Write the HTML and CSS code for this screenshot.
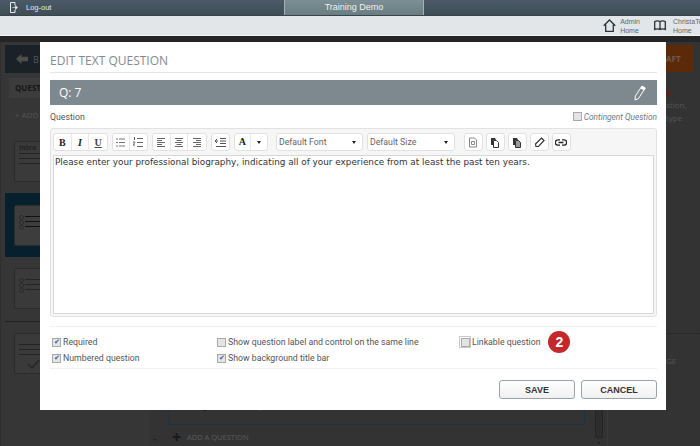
FILE: index.html
```html
<!DOCTYPE html>
<html lang="en">
<head>
    <meta charset="UTF-8">
    <title>Edit Text Question</title>
    <link rel="stylesheet" href="styles.css">
</head>
<body>
    <div class="topbar">
        <div class="logout">
            <svg width="8" height="11" viewBox="0 0 8 11"><path d="M5 3V.5H.5v10H5V8" fill="none" stroke="#e8ecee"/><path d="M2.500 5.500h3M5.500 3.500l2 2-2 2z" fill="#e8ecee" stroke="#e8ecee" stroke-width=".7"/></svg>
            <span>Log-out</span>
        </div>
        <div class="demo-tab">Training Demo</div>
    </div>
    <div class="subbar">
        <div class="nav-item">
            <svg width="13" height="13" viewBox="0 0 13 13"><path d="M.7 6.800 6.500 1l5.800 5.800M2.700 5.500v6.800h7.600V5.500" fill="none" stroke="#2b3338" stroke-width="1.300"/></svg>
            <div class="nav-text">Admin<br>Home</div>
        </div>
        <div class="nav-item nav-book">
            <svg width="12" height="11" viewBox="0 0 12 11"><path d="M.7 1.500c2-1 3.500-1 5.300 0 1.800-1 3.300-1 5.300 0v8c-2-1-3.500-1-5.300 0-1.800-1-3.300-1-5.300 0zM6 1.500v8" fill="none" stroke="#2b3338" stroke-width="1.300"/></svg>
            <div class="nav-text">ChristaTest<br>Home</div>
        </div>
    </div>

    <div class="workspace">
        <div class="sidebar">
            <div class="back-btn"><span class="back-arrow"></span>B</div>
            <div class="side-tab">QUESTIONS</div>
            <div class="side-add">+ ADD</div>
            <div class="thumb thumb-intro">
                <div class="thumb-title">intro</div>
                <div class="thumb-line"></div>
                <div class="thumb-line"></div>
                <div class="thumb-line"></div>
            </div>
            <div class="thumb-selected">
                <div class="thumb thumb-list">
                    <div class="thumb-line"></div>
                    <div class="thumb-line"></div>
                    <div class="thumb-line"></div>
                </div>
            </div>
            <div class="thumb thumb-list">
                <div class="thumb-line"></div>
                <div class="thumb-line"></div>
                <div class="thumb-line"></div>
            </div>
            <div class="side-rule"></div>
            <div class="thumb thumb-intro">
                <div class="thumb-line"></div>
                <div class="thumb-line"></div>
                <div class="thumb-line"></div>
                <svg class="thumb-check" width="13" height="10" viewBox="0 0 13 10"><path d="M1 5l4 4 7-8" fill="none" stroke="#262626" stroke-width="1.500"/></svg>
            </div>
            <span class="side-arrow"></span>
        </div>
        <div class="center">
            <div class="center-main">
                <div class="sub-frame"><span class="add-sub"><span class="plus">✚</span>ADD A SUB QUESTION</span></div>
                <div class="add-question"><span class="plus">✚</span>ADD A QUESTION</div>
            </div>
            <div class="scroll-col">
                <div class="scroll-thumb"></div>
                <span class="scroll-arrow"></span>
            </div>
        </div>
        <div class="rightside">
            <div class="draft-btn">AFT</div>
            <div class="right-title">s</div>
            <div class="right-text">stion,<br>type</div>
            <div class="right-rule"></div>
            <div class="right-page">GE</div>
        </div>
    </div>

    <div class="modal">
        <h1 class="modal-title">EDIT TEXT QUESTION</h1>
        <div class="q-bar">
            <span>Q: 7</span>
            <svg width="12" height="16" viewBox="0 0 12 16"><path d="M8 1l3.300 2L4.500 13.500 1 15l.3-4zM6.800 3l3.400 2" fill="none" stroke="#fff"/><path d="M8 1l3.300 2-1.100 2-3.400-2z" fill="#fff"/></svg>
        </div>
        <div class="question-head">
            <span class="question-label">Question</span>
            <label class="contingent"><span class="check"></span>Contingent Question</label>
        </div>
        <div class="editor">
            <div class="toolbar">
                <div class="tool-group tool-triple">
                    <span class="tool tool-serif">B</span>
                    <span class="tool tool-serif tool-i">I</span>
                    <span class="tool tool-serif tool-u">U</span>
                </div>
                <div class="tool-group">
                    <span class="tool"><svg width="11" height="9" viewBox="0 0 11 9"><path d="M1 1h2M4 1h6M1 4.500h2M4 4.500h6M1 8h2M4 8h6" stroke="#777"/></svg></span>
                    <span class="tool"><svg width="11" height="11" viewBox="0 0 11 11"><path d="M1.500 0v3M4 1.500h6M0 5h2L0 8h2M4 5.500h6M4 9.500h6" stroke="#666" fill="none"/></svg></span>
                </div>
                <div class="tool-group tool-triple">
                    <span class="tool"><svg width="10" height="9" viewBox="0 0 10 9"><path d="M1 .5h8M1 2.500h5M1 4.500h8M1 6.500h5M1 8.500h8" stroke="#666"/></svg></span>
                    <span class="tool"><svg width="10" height="9" viewBox="0 0 10 9"><path d="M1 .5h8M2.500 2.500h5M1 4.500h8M2.500 6.500h5M1 8.500h8" stroke="#666"/></svg></span>
                    <span class="tool"><svg width="10" height="9" viewBox="0 0 10 9"><path d="M1 .5h8M4 2.500h5M1 4.500h8M4 6.500h5M1 8.500h8" stroke="#666"/></svg></span>
                </div>
                <div class="tool-group">
                    <span class="tool"><svg width="11" height="9" viewBox="0 0 11 9"><path d="M5 .5h6M5 3h6M5 5.500h6M1 8.500h10M0 3h3M2 1 0 3l2 2" stroke="#555" fill="none"/></svg></span>
                </div>
                <div class="tool-group tool-color">
                    <span class="tool tool-serif tool-a">A</span>
                    <span class="tool tool-caret"><span class="caret"></span></span>
                </div>
                <div class="select select-font">Default Font<span class="caret"></span></div>
                <div class="select select-size">Default Size<span class="caret"></span></div>
                <div class="tool-group tool-single tool-first">
                    <span class="tool"><svg width="10" height="11" viewBox="0 0 10 11"><path d="M1.500 1h5l2 2v7h-7zM3.500 4.500h3v3h-3z" fill="none" stroke="#888"/></svg></span>
                </div>
                <div class="tool-group tool-single">
                    <span class="tool"><svg width="10" height="11" viewBox="0 0 10 11"><path d="M1 1h4l1 2H3v5H1z" fill="#333"/><path d="M3.500 3.500h3l2 2v5h-5z" fill="none" stroke="#333"/></svg></span>
                </div>
                <div class="tool-group tool-single">
                    <span class="tool"><svg width="10" height="11" viewBox="0 0 10 11"><path d="M1 1h4l1 2H3v5H1z" fill="#333"/><path d="M3.500 3.500h3l2 2v5h-5z" fill="#999" stroke="#333"/></svg></span>
                </div>
                <div class="tool-group tool-single">
                    <span class="tool"><svg width="11" height="11" viewBox="0 0 11 11"><path d="M7.500 1l2.500 2.500L4.500 9.500H2L1.500 7z" fill="none" stroke="#333" stroke-width="1.200"/></svg></span>
                </div>
                <div class="tool-group tool-single">
                    <span class="tool"><svg width="12" height="7" viewBox="0 0 12 7"><path d="M5 .8H3a2.700 2.700 0 0 0 0 5.400h2M7 .8h2a2.700 2.700 0 0 1 0 5.400H7M3.500 3.500h5" fill="none" stroke="#222" stroke-width="1.300"/></svg></span>
                </div>
            </div>
            <div class="text-area">Please enter your professional biography, indicating all of your experience from at least the past ten years.</div>
        </div>
        <div class="options">
            <label class="option"><span class="check">✔</span>Required</label>
            <label class="option"><span class="check"></span>Show question label and control on the same line</label>
            <label class="option option-link"><span class="check-focus"><span class="check"></span></span>Linkable question<span class="step-badge">2</span></label>
            <label class="option"><span class="check">✔</span>Numbered question</label>
            <label class="option"><span class="check">✔</span>Show background title bar</label>
        </div>
        <div class="actions">
            <button class="btn">SAVE</button>
            <button class="btn">CANCEL</button>
        </div>
    </div>
</body>
</html>
```
FILE: styles.css
```css
* {
    margin: 0;
    padding: 0;
    box-sizing: border-box;
}

html, body {
    height: 446px;
    overflow: hidden;
}

body {
    background: #333;
    font-family: "Open Sans", Arial, sans-serif;
    position: relative;
}

.topbar {
    display: flex;
    height: 16px;
    background: linear-gradient(#4a5a66, #404d57);
    border-bottom: 1px solid #39434a;
}

.logout {
    width: 284px;
    display: flex;
    align-items: center;
    padding-left: 10px;
    gap: 8px;
    color: #e8ecee;
    font-family: "Liberation Sans", Arial, sans-serif;
    font-size: 7.500px;
}

.demo-tab {
    width: 140px;
    background: linear-gradient(#7c8f94, #6a7d83);
    border-left: 1px solid #a4b2b5;
    border-right: 1px solid #a4b2b5;
    color: #eef2f2;
    font-family: "Liberation Sans", Arial, sans-serif;
    font-size: 9px;
    line-height: 15px;
    text-align: center;
}

.subbar {
    display: flex;
    justify-content: flex-end;
    height: 20px;
    background: #e2e6e8;
    border-bottom: 1px solid #f4f5f5;
}

.nav-item {
    display: flex;
    align-items: center;
    gap: 4px;
    margin-right: 14px;
}

.nav-item svg {
    flex: none;
}

.nav-book {
    width: 46px;
    gap: 7px;
    margin-right: 0;
    overflow: hidden;
    flex: none;
}

.nav-text {
    flex: none;
    font-family: "Liberation Sans", Arial, sans-serif;
    font-size: 7px;
    line-height: 9px;
    color: #666;
}

.workspace {
    display: flex;
    height: 410px;
    background: #333;
    border-top: 6px solid #252525;
}

.sidebar {
    width: 150px;
    flex: none;
    padding: 3px 0 0 4px;
    background: #363636;
    border-left: 1px solid #2f2f2f;
    position: relative;
}

.back-btn {
    display: flex;
    align-items: center;
    gap: 5px;
    height: 28px;
    width: 100px;
    padding-left: 11px;
    background: #1a2228;
    color: #555;
    font-size: 9px;
}

.back-arrow {
    width: 12px;
    height: 10px;
    background: #4d4d4d;
    clip-path: polygon(0 50%, 45% 0, 45% 28%, 100% 28%, 100% 72%, 45% 72%, 45% 100%);
}

.side-tab {
    width: 90px;
    height: 20px;
    margin: 5px 0 0 4px;
    padding-left: 6px;
    background: #3c3c3c;
    color: #161616;
    font-size: 8px;
    font-weight: 700;
    line-height: 20px;
}

.side-add {
    height: 11px;
    margin: 11px 0 21px 10px;
    color: #555;
    font-size: 8px;
    line-height: 11px;
}

.thumb {
    position: relative;
    width: 50px;
    height: 41px;
    margin: 11px 0 0 9px;
    padding: 10px 4px 0 4px;
    background: #3a3a3a;
    border: 1px solid #2b2b2b;
    border-radius: 2px;
}

.thumb-title {
    color: #222;
    font-size: 7px;
    font-weight: 700;
    line-height: 6px;
    margin-top: -7px;
    margin-bottom: 2px;
}

.thumb-line {
    height: 1px;
    margin-bottom: 4px;
    background: #242424;
}

.thumb-list {
    padding-left: 10px;
}

.thumb-list .thumb-line {
    position: relative;
}

.thumb-list .thumb-line::before {
    content: "";
    position: absolute;
    left: -6px;
    top: -1px;
    width: 3px;
    height: 3px;
    border: 1px solid #2a2a2a;
    border-radius: 50%;
}

.thumb-check {
    position: absolute;
    left: 12px;
    bottom: 4px;
}

.thumb-selected {
    width: 60px;
    height: 64px;
    margin-top: 11px;
    padding-top: 12px;
    background: #06202e;
}

.thumb-selected .thumb {
    margin-top: 0;
    background: #3d3d3d;
}

.thumb-selected .thumb-line {
    background: #111;
}

.side-rule {
    height: 1px;
    margin-top: 12px;
    background: #222;
}

.side-arrow {
    position: absolute;
    right: -7px;
    bottom: 5px;
    border-left: 2px solid transparent;
    border-right: 2px solid transparent;
    border-top: 2px solid #222;
}

.center {
    flex: 1;
    display: flex;
    padding-left: 19px;
}

.center-main {
    width: 416px;
    flex: none;
}

.sub-frame {
    display: flex;
    align-items: flex-end;
    height: 383px;
    padding: 0 0 10px 30px;
    border: 1px solid #1b3440;
}

.add-sub {
    display: flex;
    align-items: center;
    gap: 6px;
    color: #5b5b5b;
    font-size: 7.500px;
}

.add-question {
    display: flex;
    align-items: center;
    gap: 6px;
    margin: 4px 0 0 3px;
    color: #5b5b5b;
    font-size: 7.500px;
}

.plus {
    color: #1a1a1a;
    font-size: 11px;
}

.scroll-col {
    width: 8px;
    margin-left: 10px;
}

.scroll-thumb {
    height: 396px;
    background: #2d2d2d;
    border: 1px solid #242424;
    border-radius: 2px;
}

.scroll-arrow {
    display: block;
    width: 0;
    margin: 4px 0 0 2px;
    border-left: 2px solid transparent;
    border-right: 2px solid transparent;
    border-top: 2px solid #1e1e1e;
}

.rightside {
    width: 93px;
    flex: none;
    padding-top: 3px;
    border-left: 1px solid #3a3a3a;
    color: #555;
    font-size: 8px;
}

.draft-btn {
    width: 27px;
    height: 27px;
    margin-left: 58px;
    background: #5c2a08;
    color: #6e5a4d;
    font-weight: 700;
    line-height: 27px;
}

.right-title {
    margin: 14px 0 0 58px;
    color: #5e1f10;
    font-size: 10px;
    font-weight: 700;
    line-height: 12px;
}

.right-text {
    margin-left: 58px;
    line-height: 13px;
}

.right-rule {
    margin-top: 209px;
    border-top: 1px dotted #222;
}

.right-page {
    margin: 21px 0 0 58px;
    line-height: 12px;
}

.modal {
    position: absolute;
    left: 40px;
    top: 42px;
    width: 626px;
    height: 368px;
    padding: 0 9px 0 10px;
    background: #fff;
}

.modal-title {
    height: 31px;
    border-bottom: 1px solid #e4e6e6;
    color: #838b90;
    font-size: 12px;
    font-weight: 400;
    line-height: 38px;
}

.q-bar {
    display: flex;
    justify-content: space-between;
    align-items: center;
    height: 25px;
    margin-top: 7px;
    padding: 0 11px 0 9px;
    background: #7e888f;
    color: #fff;
    font-size: 12px;
}

.question-head {
    display: flex;
    justify-content: space-between;
    align-items: center;
    height: 23px;
    color: #555;
    font-family: Roboto, sans-serif;
    font-size: 8.750px;
}

.contingent {
    display: flex;
    align-items: center;
    gap: 2px;
    color: #6d7a85;
    font-style: italic;
    font-size: 8.300px;
}

.editor {
    height: 189px;
    border: 1px solid #e2e2e2;
    border-radius: 3px;
    padding: 0 2px 2px;
    background: #f6f6f6;
}

.toolbar {
    display: flex;
    align-items: center;
    height: 26px;
    gap: 4px;
}

.tool-group {
    display: flex;
    height: 18px;
    background: #fff;
    border: 1px solid #e1e1e1;
    border-radius: 3px;
}

.tool {
    display: flex;
    align-items: center;
    justify-content: center;
    width: 17px;
    border-right: 1px solid #e8e8e8;
}

.tool:last-child {
    border-right: none;
}

.tool-triple .tool {
    width: 17.670px;
}

.tool-color .tool {
    width: 16px;
}

.tool-serif {
    font-family: "Liberation Serif", serif;
    font-size: 10px;
    font-weight: 700;
    color: #222;
}

.tool-i {
    font-style: italic;
}

.tool-u {
    text-decoration: underline;
    color: #444;
}

.tool-a {
    padding-bottom: 2px;
}

.tool-single {
    margin-left: -1px;
}

.tool-first {
    margin-left: 5px;
}

.caret {
    width: 0;
    height: 0;
    border-left: 2.500px solid transparent;
    border-right: 2.500px solid transparent;
    border-top: 3.500px solid #222;
}

.select {
    display: flex;
    justify-content: space-between;
    align-items: center;
    height: 18px;
    padding: 0 6px 0 2px;
    background: #fff;
    border: 1px solid #e1e1e1;
    border-radius: 3px;
    color: #666;
    font-family: Roboto, sans-serif;
    font-size: 8.750px;
}

.select-font {
    width: 87px;
    margin-left: 4px;
}

.select-size {
    width: 88px;
}

.text-area {
    height: 159px;
    padding: 0 1px;
    background: #fff;
    border: 1px solid #d8d8d8;
    color: #333;
    font-family: "DejaVu Sans", sans-serif;
    font-size: 8.830px;
    line-height: 12px;
}

.options {
    display: grid;
    grid-template-columns: 165px 244px 1fr;
    grid-auto-rows: 16px;
    height: 43px;
    margin-top: 9px;
    padding: 7px 0 0 2px;
    border-top: 1px solid #f0f0f0;
    border-bottom: 1px solid #f0f0f0;
    color: #555;
    font-family: Roboto, sans-serif;
    font-size: 8.750px;
}

.option {
    display: flex;
    align-items: center;
    gap: 2px;
}

.check {
    display: flex;
    align-items: center;
    justify-content: center;
    width: 9px;
    height: 9px;
    background: #e4e4e4;
    border: 1px solid #aaa;
    color: #2f5fb5;
    font-size: 7px;
    line-height: 1;
}

.check-focus {
    display: flex;
    align-items: center;
    justify-content: center;
    width: 12px;
    height: 12px;
    margin: 0 -1px 0 -2px;
    background: #fff;
    border: 1px solid #c8c8c8;
}

.step-badge {
    display: flex;
    align-items: center;
    justify-content: center;
    width: 22px;
    height: 22px;
    margin-left: 6px;
    border-radius: 50%;
    background: #c5282a;
    color: #fff;
    font-family: "Liberation Sans", Arial, sans-serif;
    font-size: 14px;
    font-weight: 700;
}

.actions {
    display: flex;
    justify-content: flex-end;
    gap: 6px;
    margin-top: 11px;
}

.btn {
    width: 76px;
    height: 19px;
    background: linear-gradient(#fff, #f0f0f0);
    border: 1px solid #9ba3a8;
    border-radius: 3px;
    color: #333;
    font-family: "Liberation Sans", Arial, sans-serif;
    font-size: 9px;
    font-weight: 700;
}
```
